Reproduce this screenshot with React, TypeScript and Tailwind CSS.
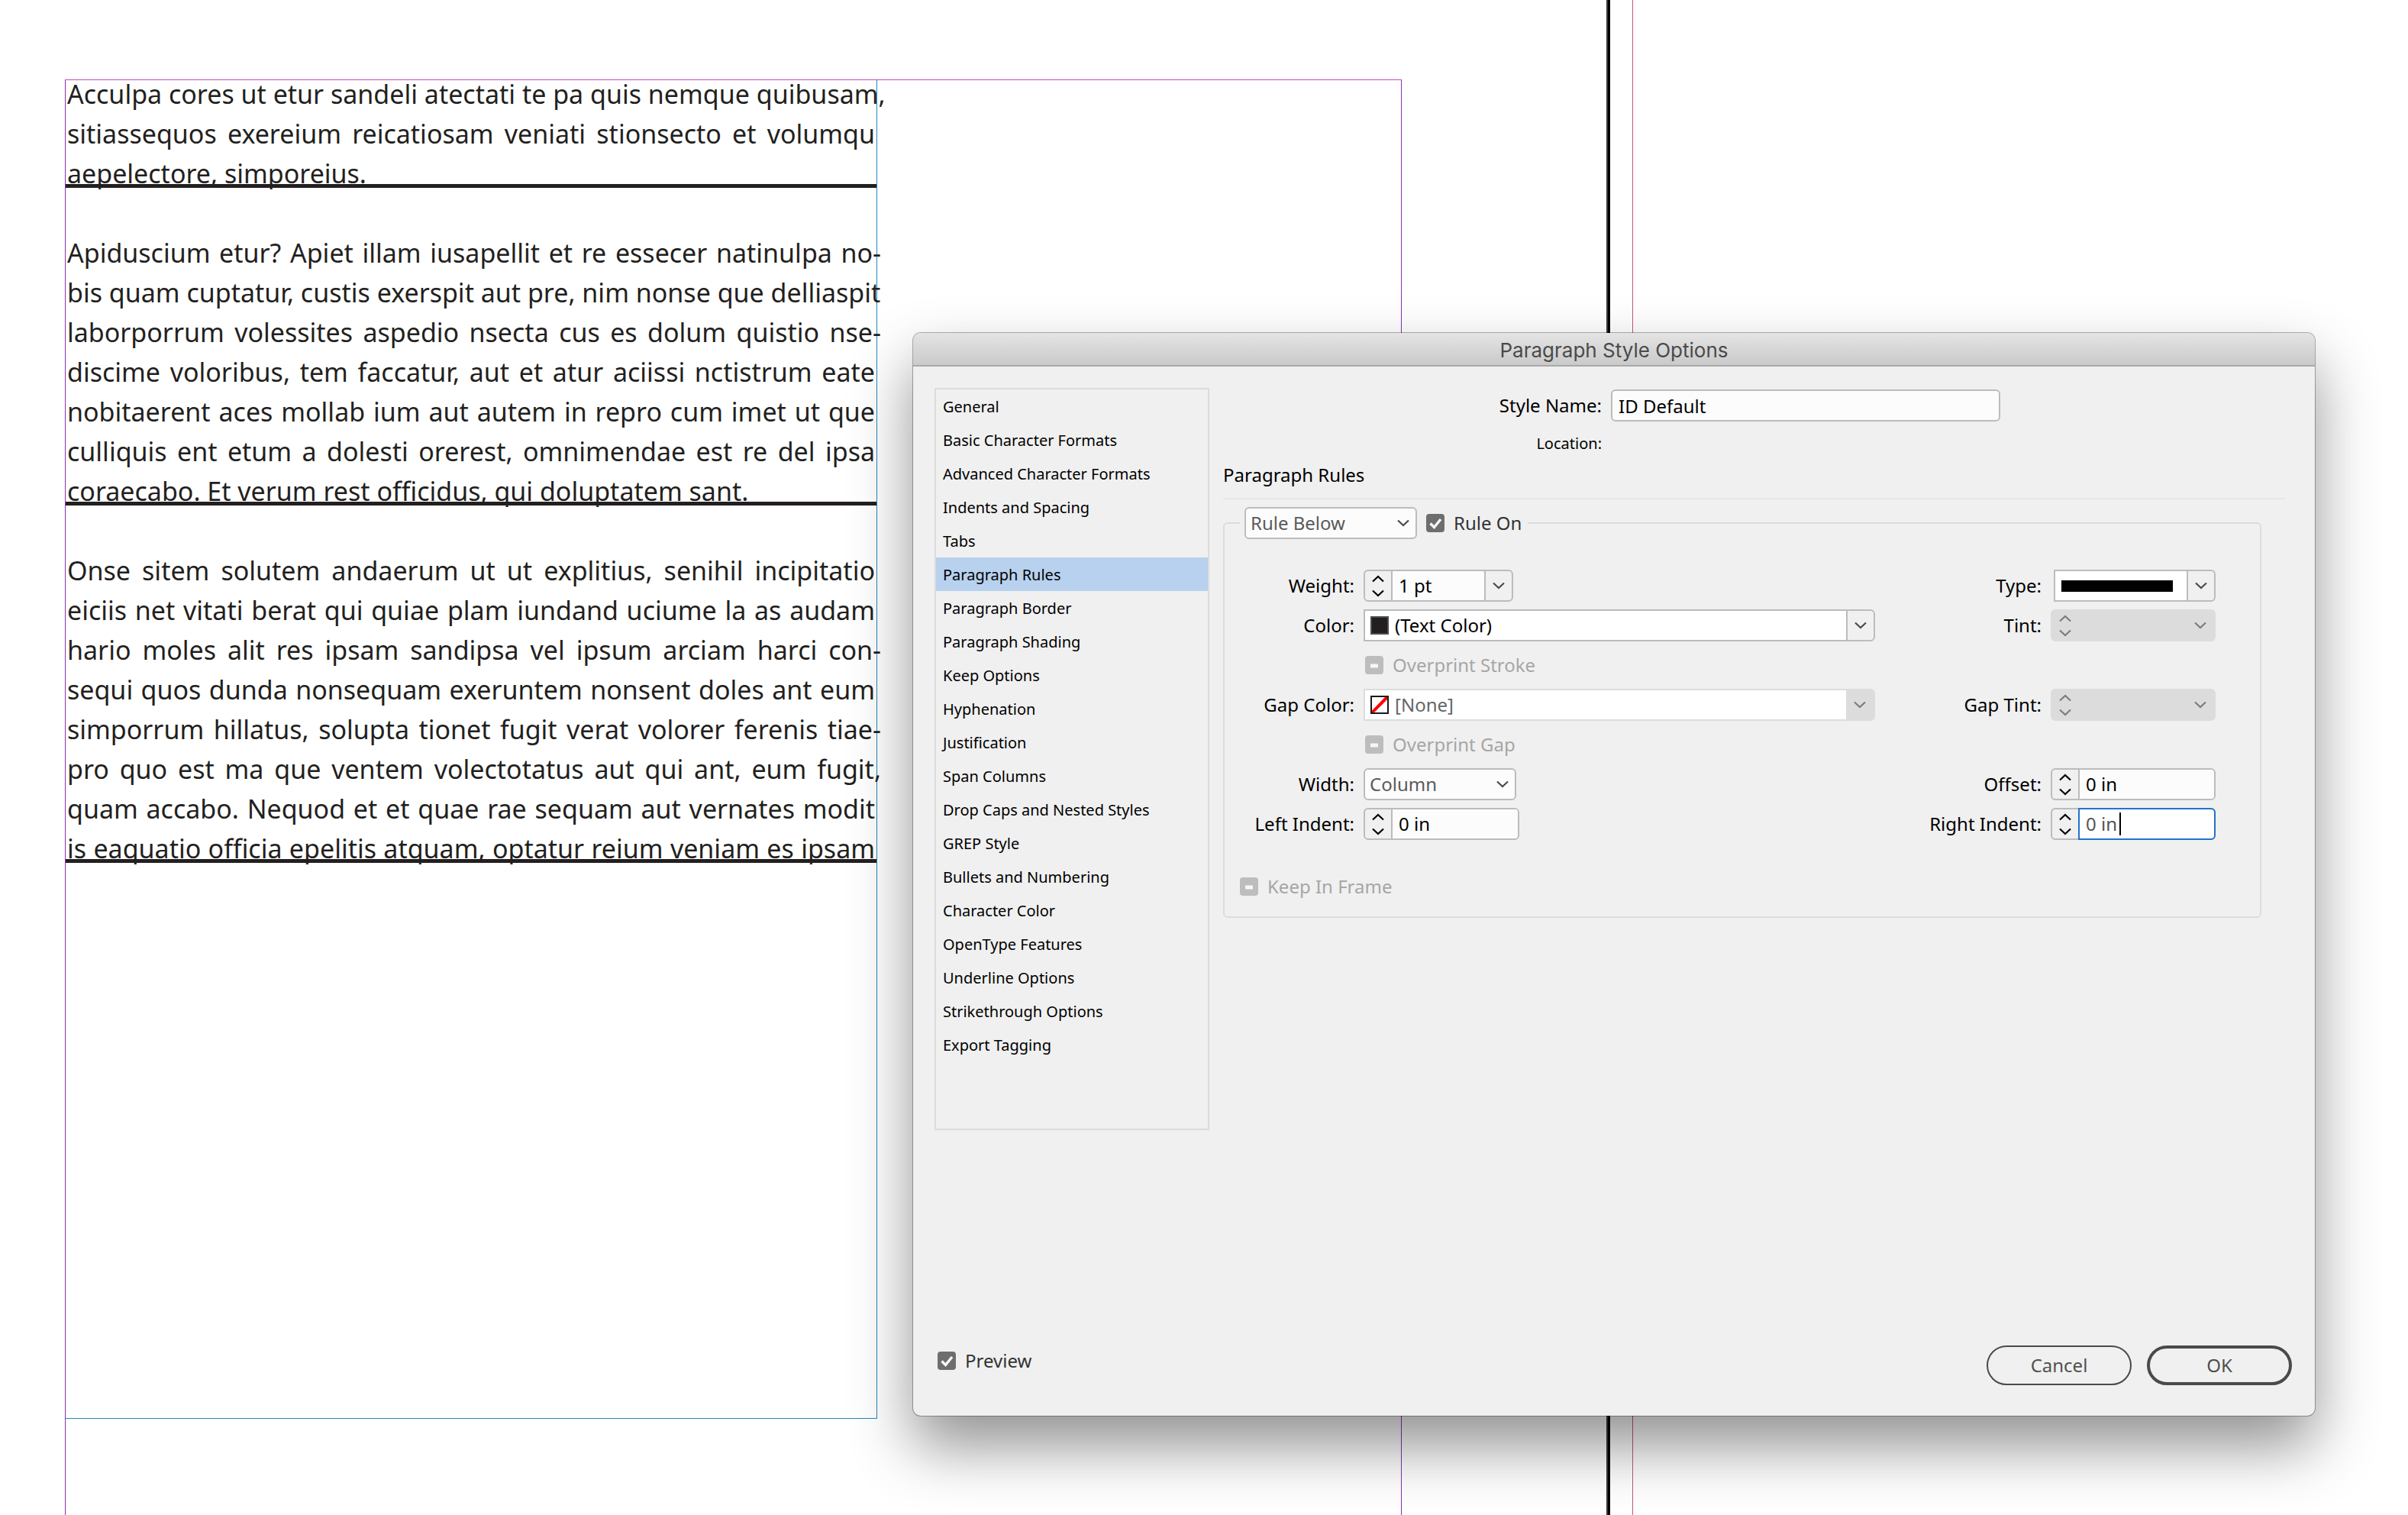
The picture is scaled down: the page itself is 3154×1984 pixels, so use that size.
import { useId, type ReactNode } from "react";

const CATEGORIES = [
  "General",
  "Basic Character Formats",
  "Advanced Character Formats",
  "Indents and Spacing",
  "Tabs",
  "Paragraph Rules",
  "Paragraph Border",
  "Paragraph Shading",
  "Keep Options",
  "Hyphenation",
  "Justification",
  "Span Columns",
  "Drop Caps and Nested Styles",
  "GREP Style",
  "Bullets and Numbering",
  "Character Color",
  "OpenType Features",
  "Underline Options",
  "Strikethrough Options",
  "Export Tagging",
];

const STORY = [
  {
    ragged: true,
    lines: [
      "Acculpa cores ut etur sandeli atectati te pa quis nemque quibusam,",
      "sitiassequos exereium reicatiosam veniati stionsecto et volumqu",
      "aepelectore, simporeius.",
    ],
  },
  {
    ragged: true,
    lines: [
      "Apiduscium etur? Apiet illam iusapellit et re essecer natinulpa no-",
      "bis quam cuptatur, custis exerspit aut pre, nim nonse que delliaspit",
      "laborporrum volessites aspedio nsecta cus es dolum quistio nse-",
      "discime voloribus, tem faccatur, aut et atur aciissi nctistrum eate",
      "nobitaerent aces mollab ium aut autem in repro cum imet ut que",
      "culliquis ent etum a dolesti orerest, omnimendae est re del ipsa",
      "coraecabo. Et verum rest officidus, qui doluptatem sant.",
    ],
  },
  {
    ragged: false,
    lines: [
      "Onse sitem solutem andaerum ut ut explitius, senihil incipitatio",
      "eiciis net vitati berat qui quiae plam iundand uciume la as audam",
      "hario moles alit res ipsam sandipsa vel ipsum arciam harci con-",
      "sequi quos dunda nonsequam exeruntem nonsent doles ant eum",
      "simporrum hillatus, solupta tionet fugit verat volorer ferenis tiae-",
      "pro quo est ma que ventem volectotatus aut qui ant, eum fugit,",
      "quam accabo. Nequod et et quae rae sequam aut vernates modit",
      "is eaquatio officia epelitis atquam, optatur reium veniam es ipsam",
    ],
  },
];

function Chevron({ up = false }: { up?: boolean }) {
  return (
    <svg viewBox="0 0 16 10" className="h-[10px] w-4" fill="none" stroke="currentColor" strokeWidth="2.2">
      <path d={up ? "M1 8.5 8 2l7 6.5" : "M1 1.5 8 8l7-6.5"} />
    </svg>
  );
}

// Punctuation at the end of a full line hangs outside the frame.
function lineClass(line: string, last: boolean) {
  if (last) return "whitespace-nowrap";
  if (/[-,]$/.test(line)) return "-mr-2 whitespace-nowrap text-justify [text-align-last:justify]";
  return "whitespace-nowrap text-justify [text-align-last:justify]";
}

function Story() {
  return (
    <div className="-mt-2 space-y-[52px] text-[34px] leading-[52px] text-[#231f20]">
      {STORY.map((p) => (
        <div key={p.lines[0]} className="relative px-0.5">
          {p.lines.map((line, i) => (
            <div key={line} className={lineClass(line, p.ragged && i === p.lines.length - 1)}>
              {line}
            </div>
          ))}
          <div className="absolute inset-x-0 bottom-[7px] h-[5px] bg-[#231f20]" />
        </div>
      ))}
    </div>
  );
}

function Check({ label, mixed = false, className = "" }: { label: string; mixed?: boolean; className?: string }) {
  return (
    <label className={`flex items-center gap-3 leading-6 ${mixed ? "text-[#a6a6a6]" : "text-[#333333]"} ${className}`}>
      <span className="relative size-6">
        <input
          type="checkbox"
          defaultChecked={!mixed}
          disabled={mixed}
          className={`block size-6 appearance-none rounded-[4px] ${mixed ? "bg-[#bdbdbd]" : "bg-[#6e6e6e]"}`}
        />
        <svg viewBox="0 0 24 24" className="pointer-events-none absolute inset-0 size-6" fill="none" stroke="#f7f7f7">
          {mixed ? (
            <path d="M7 13h10" strokeWidth="5" />
          ) : (
            <path d="m5.5 12.5 5 5L19 7" strokeWidth="3.4" />
          )}
        </svg>
      </span>
      {label}
    </label>
  );
}

function Popup({ label, value, id, className }: { label?: string; value: string; id?: string; className: string }) {
  return (
    <div className={`relative ${className}`}>
      <select
        id={id}
        aria-label={label}
        className="h-[42px] w-full appearance-none rounded-md border-2 border-[#bcbcbc] bg-[#fcfcfc] pl-[6px] text-[#5a5a5a]"
      >
        <option>{value}</option>
      </select>
      <span className="pointer-events-none absolute inset-y-0 right-[10px] flex items-center text-[#4a4a4a]">
        <Chevron />
      </span>
    </div>
  );
}

function Stepper({ name, disabled = false }: { name: string; disabled?: boolean }) {
  return (
    <div className={`flex w-[34px] shrink-0 flex-col ${disabled ? "text-[#7c7c7c]" : "text-black"}`}>
      <button type="button" disabled={disabled} aria-label={`Increase ${name}`} className="flex flex-1 items-center justify-center">
        <Chevron up />
      </button>
      <button type="button" disabled={disabled} aria-label={`Decrease ${name}`} className="flex flex-1 items-center justify-center">
        <Chevron />
      </button>
    </div>
  );
}

function DropButton({ name, disabled = false }: { name: string; disabled?: boolean }) {
  return (
    <button
      type="button"
      disabled={disabled}
      aria-label={`${name} menu`}
      className={`flex w-9 shrink-0 items-center justify-center ${
        disabled ? "bg-[#dcdcdc] text-[#7c7c7c]" : "border-l-2 border-[#bcbcbc] text-[#4a4a4a]"
      }`}
    >
      <Chevron />
    </button>
  );
}

function Measure({
  id,
  name,
  value,
  menu = false,
  focused = false,
  className,
}: {
  id: string;
  name: string;
  value: string;
  menu?: boolean;
  focused?: boolean;
  className: string;
}) {
  return (
    <div className={`relative flex h-[42px] rounded-md border-2 border-[#bcbcbc] ${className}`}>
      <Stepper name={name} />
      <input
        id={id}
        defaultValue={value}
        className={
          focused
            ? "-my-0.5 -mr-0.5 min-w-0 flex-1 rounded-r-md border-2 border-[#2272cf] bg-white pl-2 text-[#555555] outline-none"
            : "min-w-0 flex-1 rounded-r-[4px] border-l-2 border-[#bcbcbc] bg-[#fcfcfc] pl-2 text-black outline-none"
        }
      />
      {focused && <span className="absolute top-1 left-[88px] h-[30px] w-[2px] bg-black" />}
      {menu && <DropButton name={name} />}
    </div>
  );
}

function EmptyMeasure({ id, name }: { id: string; name: string }) {
  return (
    <div className="flex h-[42px] rounded-md border-2 border-[#dcdcdc] bg-[#dcdcdc]">
      <Stepper name={name} disabled />
      <input id={id} disabled className="min-w-0 flex-1" />
      <DropButton name={name} disabled />
    </div>
  );
}

function SwatchField({ id, name, value, none = false }: { id: string; name: string; value: string; none?: boolean }) {
  return (
    <div className={`flex h-[42px] overflow-hidden rounded-r-md border-2 ${none ? "border-[#dcdcdc]" : "border-[#bcbcbc]"}`}>
      <div className="flex min-w-0 flex-1 items-center gap-2 bg-white pl-[7px]">
        <svg viewBox="0 0 24 24" className="size-6 shrink-0">
          <rect x="1" y="1" width="22" height="22" fill={none ? "#ffffff" : "#231f20"} stroke={none ? "#1a1a1a" : "#4d4d4d"} strokeWidth="2" />
          {none && <path d="M2 19.5V22h3L22 5V2h-3z" fill="#ff0000" />}
        </svg>
        <input
          id={id}
          defaultValue={value}
          disabled={none}
          className={`min-w-0 flex-1 outline-none ${none ? "text-[#666666]" : "text-black"}`}
        />
      </div>
      <DropButton name={name} disabled={none} />
    </div>
  );
}

function Caption({ htmlFor, children }: { htmlFor: string; children: ReactNode }) {
  return (
    <label htmlFor={htmlFor} className="text-right leading-[42px]">
      {children}
    </label>
  );
}

function RuleSettings() {
  const uid = useId();
  return (
    <fieldset className="mt-[10px] mr-[70px] rounded-md border-2 border-[#dcdcdc] pb-[18px]">
      <legend className="ml-5 flex items-center gap-3 pr-2 pl-[6px]">
        <Popup label="Rule" value="Rule Below" className="w-[226px]" />
        <Check label="Rule On" />
      </legend>
      <div className="grid auto-rows-[42px] grid-cols-[170px_minmax(0,670px)_1fr_216px] gap-x-3 gap-y-[10px] pt-10 pr-[58px]">
        <Caption htmlFor={`${uid}weight`}>Weight:</Caption>
        <Measure id={`${uid}weight`} name="weight" value="1 pt" menu className="w-[196px]" />
        <Caption htmlFor={`${uid}type`}>Type:</Caption>
        <button id={`${uid}type`} type="button" className="ml-1 flex rounded-r-md border-2 border-[#bcbcbc]">
          <span className="flex flex-1 items-center self-stretch bg-white pl-2">
            <span className="h-[15px] w-[146px] bg-black" />
          </span>
          <span className="flex w-9 items-center justify-center self-stretch border-l-2 border-[#bcbcbc] text-[#4a4a4a]">
            <Chevron />
          </span>
        </button>

        <Caption htmlFor={`${uid}color`}>Color:</Caption>
        <SwatchField id={`${uid}color`} name="color" value="(Text Color)" />
        <Caption htmlFor={`${uid}tint`}>Tint:</Caption>
        <EmptyMeasure id={`${uid}tint`} name="tint" />

        <Check label="Overprint Stroke" mixed className="col-span-3 col-start-2 ml-0.5" />

        <Caption htmlFor={`${uid}gapcolor`}>Gap Color:</Caption>
        <SwatchField id={`${uid}gapcolor`} name="gap color" value="[None]" none />
        <Caption htmlFor={`${uid}gaptint`}>Gap Tint:</Caption>
        <EmptyMeasure id={`${uid}gaptint`} name="gap tint" />

        <Check label="Overprint Gap" mixed className="col-span-3 col-start-2 ml-0.5" />

        <Caption htmlFor={`${uid}width`}>Width:</Caption>
        <Popup id={`${uid}width`} value="Column" className="w-[200px]" />
        <Caption htmlFor={`${uid}offset`}>Offset:</Caption>
        <Measure id={`${uid}offset`} name="offset" value="0 in" className="w-full" />

        <Caption htmlFor={`${uid}left`}>Left Indent:</Caption>
        <Measure id={`${uid}left`} name="left indent" value="0 in" className="w-[204px]" />
        <Caption htmlFor={`${uid}right`}>Right Indent:</Caption>
        <Measure id={`${uid}right`} name="right indent" value="0 in" focused className="w-full" />
      </div>
      <Check label="Keep In Frame" mixed className="mt-10 ml-5 h-[42px]" />
    </fieldset>
  );
}

function StyleDialog() {
  return (
    <section
      role="dialog"
      aria-label="Paragraph Style Options"
      className="absolute top-[436px] right-[122px] left-[1196px] rounded-[10px] bg-[#f0f0f0] pb-10 shadow-[0_0_0_1px_rgba(0,0,0,0.3),0_40px_80px_rgba(0,0,0,0.43)]"
    >
      <h1 className="h-11 rounded-t-[10px] border-b-2 border-[#a9a9a9] bg-linear-to-b from-[#e4e4e4] to-[#cacaca] text-center font-['Inter',sans-serif] text-[26px] leading-[46px] text-[#4a4a4a]">
        Paragraph Style Options
      </h1>

      <div className="flex gap-[18px] pt-7 pl-7">
        <ul className="h-[972px] w-[360px] shrink-0 border-2 border-[#dcdcdc] text-xl">
          {CATEGORIES.map((c) => (
            <li key={c}>
              <button
                type="button"
                className={`block h-11 w-full pl-[9px] text-left leading-[46px] ${c === "Paragraph Rules" ? "bg-[#b7d1ee]" : ""}`}
              >
                {c}
              </button>
            </li>
          ))}
        </ul>

        <div className="min-w-0 flex-1 pt-0.5">
          <div className="grid grid-cols-[496px_510px] gap-x-3">
            <label htmlFor="style-name" className="text-right leading-[42px]">
              Style Name:
            </label>
            <input
              id="style-name"
              defaultValue="ID Default"
              className="h-[42px] rounded-md border-2 border-[#bcbcbc] bg-[#fcfcfc] pl-2 outline-none"
            />
            <div className="mt-4 text-right text-xl leading-[26px]">Location:</div>
          </div>
          <h2 className="mt-3 leading-8">Paragraph Rules</h2>
          <hr className="mt-[14px] mr-[39px] border-t-2 border-[#e6e6e6]" />
          <RuleSettings />
        </div>
      </div>

      <footer className="mt-[282px] flex items-start gap-5 pr-[30px] pl-8">
        <Check label="Preview" className="mt-2 mr-auto" />
        <button type="button" className="h-[52px] w-[190px] rounded-full border-2 border-[#4a4a4a] text-[#505050]">
          Cancel
        </button>
        <button type="button" className="h-[52px] w-[190px] rounded-full border-4 border-[#4a4a4a] text-[#505050]">
          OK
        </button>
      </footer>
    </section>
  );
}

export default function App() {
  return (
    <main className="relative flex min-h-screen overflow-hidden bg-white pt-[104px] pl-[85px] font-['Noto_Sans',sans-serif] text-2xl text-black">
      {/* margin guides, open at the bottom where the page runs on */}
      <div className="w-[1751px] border-x border-t border-x-[#8a32b0] border-t-[#c44cc0]">
        <div className="flow-root h-[1753px] w-[1063px] border-r border-b border-[#2388bb]">
          <Story />
        </div>
      </div>
      {/* page edge and bleed guide */}
      <div className="absolute inset-y-0 left-[2104px] w-[5px] border-l-2 border-[#3a3a3a] bg-black" />
      <div className="absolute inset-y-0 left-[2138px] w-px bg-[#c45a74]" />
      <StyleDialog />
    </main>
  );
}
